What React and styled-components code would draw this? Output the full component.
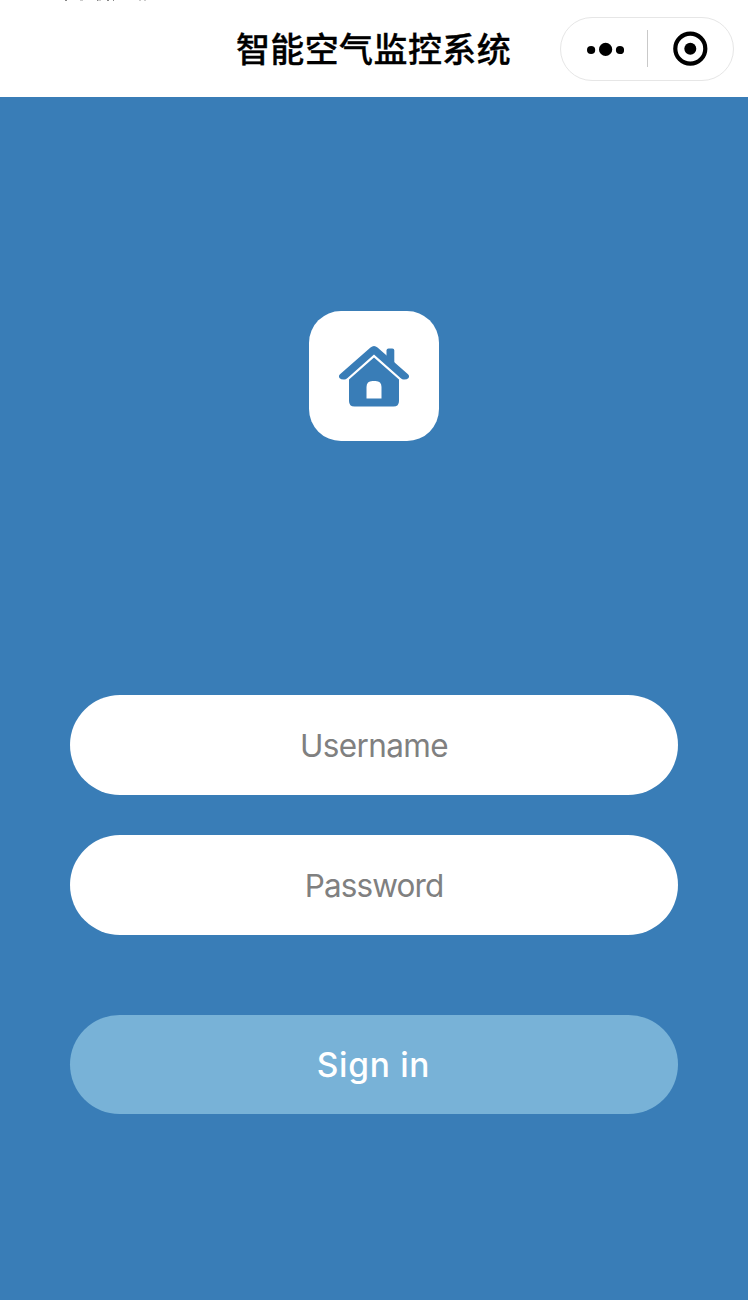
import React from "react";
import styled, { createGlobalStyle } from "styled-components";

const GlobalStyle = createGlobalStyle`
  *, *::before, *::after { box-sizing: border-box; }
  body { margin: 0; background: #397db7; }
`;

const Screen = styled.div`
  display: flex;
  flex-direction: column;
  width: 748px;
  height: 1300px;
  overflow: hidden;
  background: #397db7;
  font-family: Inter, "Noto Sans CJK SC", sans-serif;
`;

const NavBar = styled.header`
  display: grid;
  grid-template-columns: 1fr auto 1fr;
  align-items: center;
  height: 97px;
  padding: 0 14px;
  background: #fff;
  position: relative;
`;

const StatusTrace = styled.svg`
  position: absolute;
  top: 0;
  left: 60px;
`;

const Title = styled.h1`
  grid-column: 2;
  margin: 0 1px 2px 0;
  font: 500 34px/48px "Noto Sans CJK SC", sans-serif;
  letter-spacing: 0.4px;
  color: #000;
  -webkit-text-stroke: 0.3px #000;
`;

const Capsule = styled.div`
  justify-self: end;
  display: flex;
  align-items: center;
  width: 174px;
  height: 64px;
  border: 1px solid #e6e6e6;
  border-radius: 32px;
`;

const CapsuleAction = styled.button`
  display: flex;
  align-items: center;
  justify-content: center;
  flex: 1;
  height: 100%;
  padding: 0;
  border: 0;
  background: none;
`;

const Divider = styled.span`
  width: 1px;
  height: 37px;
  background: #c9c9c9;
`;

const Login = styled.main`
  display: flex;
  flex-direction: column;
  align-items: center;
  padding: 214px 70px 0;
`;

const Logo = styled.div`
  width: 130px;
  height: 130px;
  border-radius: 32px;
  background: #fff;
`;

const Form = styled.form`
  display: flex;
  flex-direction: column;
  width: 100%;
  margin-top: 254px;
`;

const Field = styled.input`
  width: 100%;
  height: 100px;
  margin: 0 0 40px;
  padding: 0 40px;
  border: 0;
  border-radius: 50px;
  outline: 0;
  background: #fff;
  color: #333;
  font: 400 31.5px/40px Inter, sans-serif;
  letter-spacing: ${(p) => p.$tracking};
  text-align: center;
  &::placeholder { color: #808080; opacity: 1; }
`;

const SubmitButton = styled.button`
  height: 99px;
  margin-top: 40px;
  padding: 0 1px 0 0;
  border: 0;
  border-radius: 50px;
  background: #78b2d7;
  color: #fff;
  font: 500 33.5px/44px Inter, sans-serif;
  letter-spacing: 0.7px;
`;

export default function App() {
  return (
    <Screen>
      <GlobalStyle />
      <NavBar>
        <StatusTrace width="100" height="1" aria-hidden="true">
          <path d="M5 .5h2M37 .5h2M47 .5h2M53 .5h1" stroke="#888" />
          <path d="M20 .5h3M38 .5h3M79 .5h2M84 .5h2" stroke="#ccc" />
        </StatusTrace>
        <Title>智能空气监控系统</Title>
        <Capsule>
          <CapsuleAction aria-label="More">
            <svg width="40" height="20" viewBox="0 0 40 20">
              <circle cx="7.1" cy="11" r="4.1" />
              <circle cx="21.6" cy="10.4" r="6.6" />
              <circle cx="36" cy="11" r="4.1" />
            </svg>
          </CapsuleAction>
          <Divider />
          <CapsuleAction aria-label="Close">
            <svg width="36" height="36" viewBox="0 0 36 36">
              <circle cx="18.3" cy="17.7" r="15" fill="none" stroke="#000" strokeWidth="4.2" />
              <circle cx="18.3" cy="17.7" r="6" />
            </svg>
          </CapsuleAction>
        </Capsule>
      </NavBar>
      <Login>
        <Logo>
          <svg width="130" height="130" viewBox="0 0 130 130" fill="#397db7">
            <path d="M77.500 49V39.500q0-2 2-2h3.800q2 0 2 2V56z" />
            <path d="M61.500 36.500q3.500-3 7 0L99 63.300q2 2.200.3 4-1.300 1.300-4.500 1.200-1.600 0-3.300-1.500L65 43.500 38.500 67q-1.700 1.500-3.300 1.500-3.200.1-4.500-1.200-1.700-1.800.3-4z" />
            <path
              fillRule="evenodd"
              d="M65 46.500L90 68.500V90q0 5.500-5.500 5.500h-39Q40 95.500 40 90V68.500zM57.500 87.500h15V76q0-6-6-6h-3q-6 0-6 6z"
            />
          </svg>
        </Logo>
        <Form onSubmit={(e) => e.preventDefault()}>
          <Field placeholder="Username" aria-label="Username" $tracking="-0.6px" />
          <Field type="password" placeholder="Password" aria-label="Password" $tracking="-0.9px" />
          <SubmitButton>Sign in</SubmitButton>
        </Form>
      </Login>
    </Screen>
  );
}
